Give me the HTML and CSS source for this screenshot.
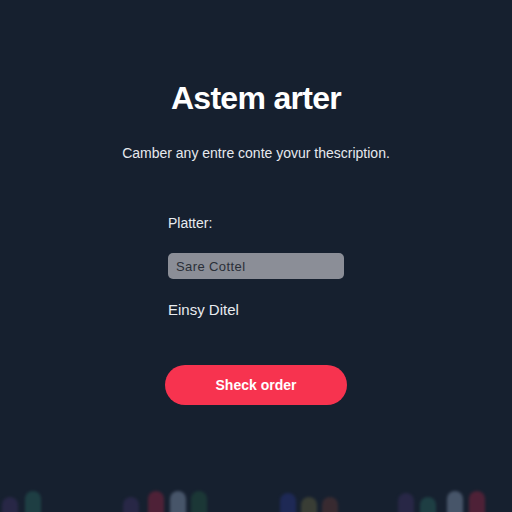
FILE: index.html
```html
<!DOCTYPE html>
<html lang="en">
<head>
  <meta charset="UTF-8">
  <meta name="viewport" content="width=device-width, initial-scale=1.0">
  <title>Astem arter</title>
  <link rel="stylesheet" href="styles.css">
</head>
<body>

<div class="page">
  <h1>Astem arter</h1>
  <p class="lead">Camber any entre conte yovur thescription.</p>

  <div class="form">
    <label for="platter">Platter:</label>
    <input type="text" id="platter" value="Sare Cottel">
    <div class="note">Einsy Ditel</div>
  </div>

  <button class="cta">Sheck order</button>

  <!-- decorative pills along the bottom -->
  <div class="pills">
    <span class="pill purple low" style="margin-left:2px"></span>
    <span class="pill teal" style="margin-left:7px"></span>
    <span class="pill purple low" style="margin-left:82px"></span>
    <span class="pill red" style="margin-left:9px"></span>
    <span class="pill grey" style="margin-left:6px"></span>
    <span class="pill green" style="margin-left:5px"></span>
    <span class="pill blue mid" style="margin-left:73px"></span>
    <span class="pill olive low" style="margin-left:5px"></span>
    <span class="pill brown low" style="margin-left:5px"></span>
    <span class="pill purple mid" style="margin-left:60px"></span>
    <span class="pill teal low" style="margin-left:6px"></span>
    <span class="pill grey" style="margin-left:11px"></span>
    <span class="pill red" style="margin-left:6px"></span>
  </div>
</div>

</body>
</html>
```

FILE: styles.css
```css
body {
  margin: 0;
  background-color: #16202f;
  color: #f2f4f7;
  font-family: "Liberation Sans", Arial, sans-serif;
}
.page {
  position: relative;
  height: 512px;
  overflow: hidden;
  display: flex;
  flex-direction: column;
  align-items: center;
  padding-top: 80px;
  box-sizing: border-box;
}
h1 {
  margin: 0;
  font-size: 32px;
  line-height: 36px;
  font-weight: bold;
  letter-spacing: -0.7px;
  color: #ffffff;
}
.lead {
  margin: 26px 0 0 0;
  font-size: 14px;
  line-height: 22px;
  color: #e6e9ee;
}
.form {
  width: 176px;
  margin-top: 49px;
  display: flex;
  flex-direction: column;
}
label {
  font-size: 14px;
  line-height: 20px;
  color: #e8ebef;
}
input {
  margin-top: 20px;
  height: 26px;
  padding: 0 8px;
  border: none;
  border-radius: 5px;
  background-color: #8b8e97;
  color: #2a2f38;
  font-family: "Liberation Sans", Arial, sans-serif;
  font-size: 13px;
  letter-spacing: 0.4px;
  box-sizing: border-box;
}
.note {
  margin-top: 21px;
  font-size: 15px;
  line-height: 20px;
  color: #e8ebef;
}
.cta {
  margin-top: 45px;
  width: 182px;
  height: 40px;
  border: none;
  border-radius: 20px;
  background-color: #f7334f;
  color: #fff;
  font-family: "Liberation Sans", Arial, sans-serif;
  font-size: 14px;
  font-weight: bold;
  cursor: pointer;
}
.pills {
  position: absolute;
  left: 0;
  right: 0;
  bottom: 0;
  height: 21px;
  display: flex;
  align-items: flex-start;
  filter: blur(1.5px);
  opacity: 0.9;
}
.pill {
  width: 16px;
  height: 30px;
  border-radius: 8px;
  flex-shrink: 0;
}
.pill.mid { margin-top: 2px; }
.pill.low { margin-top: 6px; }
.purple { background-color: #2a2849; }
.teal { background-color: #1f4246; }
.red { background-color: #552238; }
.grey { background-color: #4d5b70; }
.green { background-color: #1c3a37; }
.blue { background-color: #1f2a5a; }
.olive { background-color: #3d4136; }
.brown { background-color: #3c2c31; }
```
